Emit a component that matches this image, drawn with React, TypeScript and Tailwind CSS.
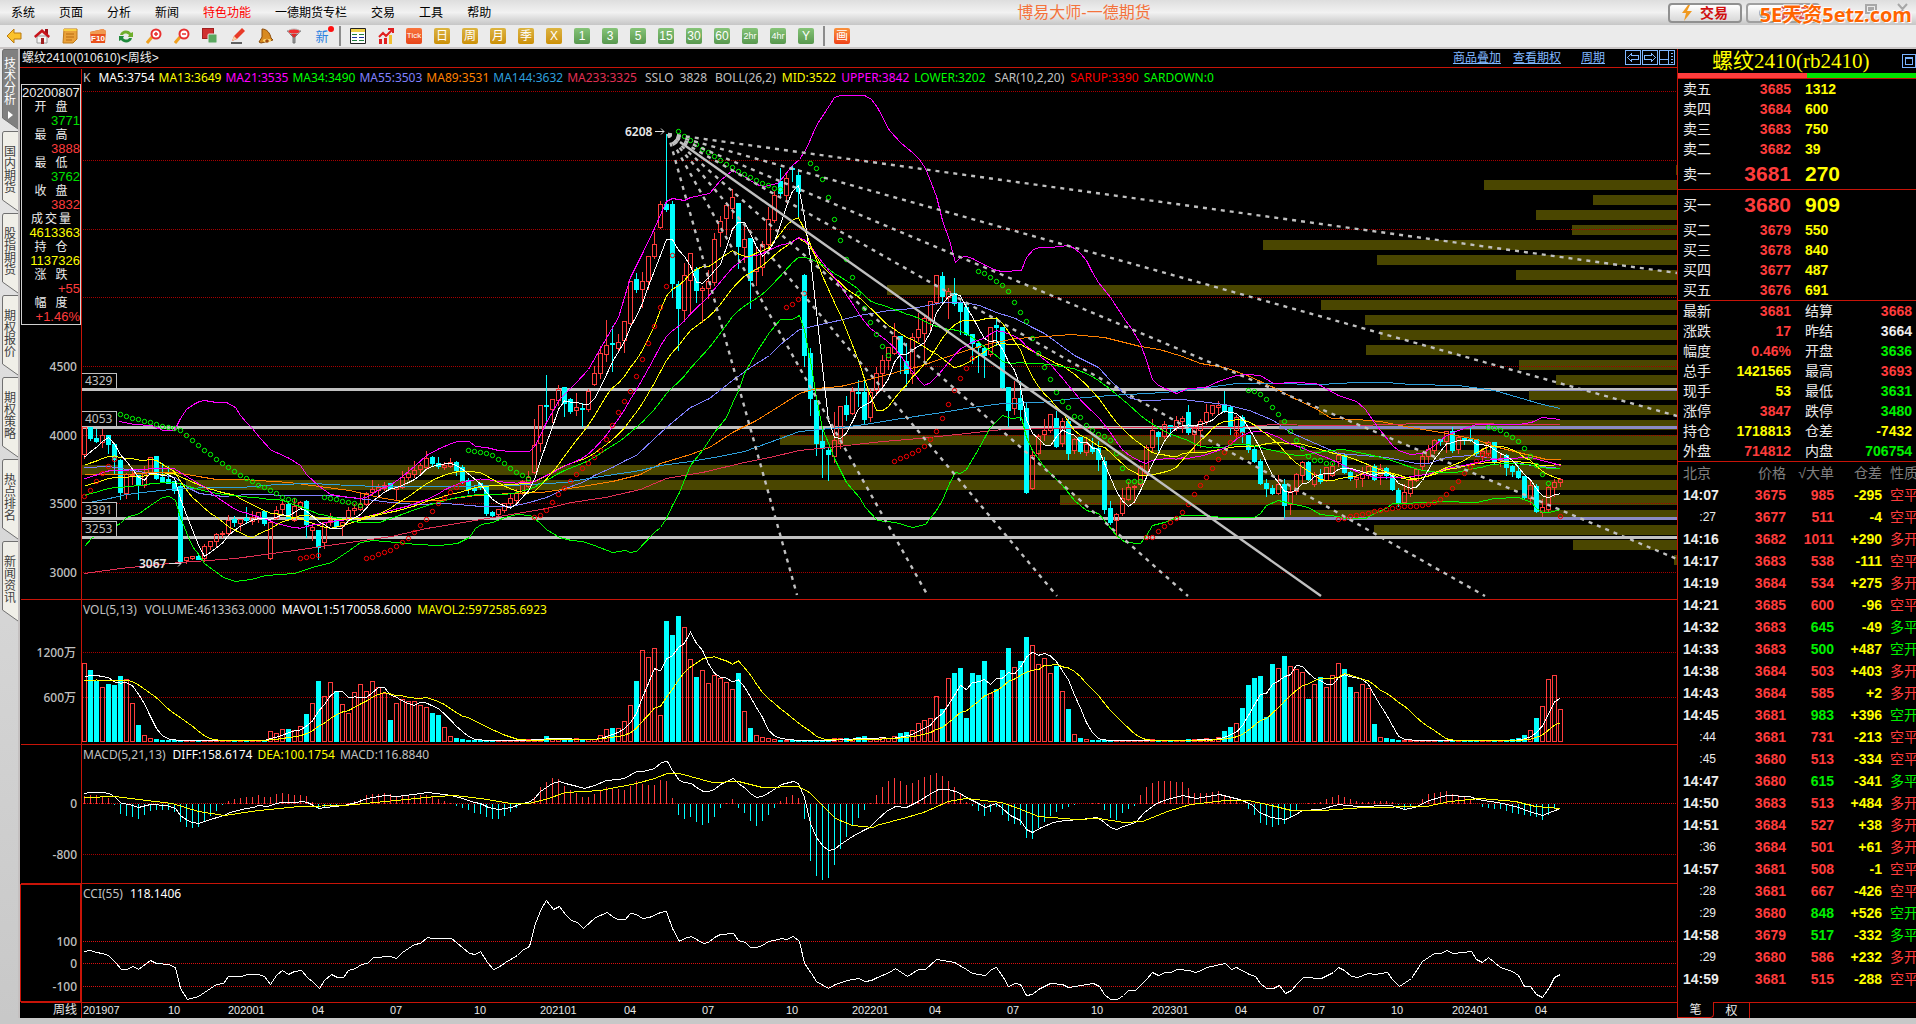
import React from 'react';

// Weekly bars: direction, body top, body bottom, high, low (chart units, one bar every 6 units)
const BARS = `
u 427 454 427 458|d 427 438 427 440|d 438 441 428 442|u 435 442 428 447|d 435 444 434 453|d 444 459 443 473|d 460 492 458 499|u 474 493 472 498|u 474 475 470 484|d 475 485 475 499
u 473 485 465 487|u 457 472 456 473|d 456 478 455 479|d 477 481 462 482|d 479 483 465 483|d 481 490 480 493|d 486 561 482 563|u 557 560 556 563|u 556 558 555 559|d 556 559 553 559
u 546 558 543 561|u 541 546 540 549|u 534 541 532 547|u 533 534 530 537|u 520 533 514 535|d 519 522 515 526|u 519 523 518 530|d 518 520 506 522|u 517 521 510 524|u 512 518 511 522
d 511 523 510 525|u 522 558 521 559|u 510 518 505 519|u 504 509 498 514|d 504 518 500 519|u 506 520 497 521|u 502 507 500 508|d 501 524 499 537|u 527 530 524 540|d 530 547 530 559
u 522 542 521 548|u 520 522 512 525|d 520 526 518 528|u 522 526 521 535|u 510 520 506 521|u 508 510 503 514|u 504 509 491 510|u 493 504 491 505|u 489 492 479 495|u 487 490 483 495
u 485 488 481 490|d 483 488 482 489|u 487 489 485 499|u 477 487 470 488|u 473 477 466 479|u 470 474 460 477|u 465 469 462 474|u 458 467 450 468|d 457 463 455 466|d 463 466 456 468
u 465 467 461 469|u 462 466 457 467|d 462 470 460 475|d 467 481 464 483|d 480 489 477 493|d 488 490 484 492|d 483 487 482 489|d 485 513 484 515|d 512 515 510 517|u 509 514 508 516
u 503 510 502 512|u 498 503 493 505|u 493 500 488 502|u 481 493 479 494|u 477 486 470 487|u 445 472 418 473|u 405 443 405 451|d 405 406 374 421|u 399 409 398 422|u 389 400 384 405
d 387 403 386 416|d 399 411 397 413|u 407 410 392 415|d 408 409 402 426|u 391 409 388 411|u 373 384 365 385|u 353 373 345 378|u 345 354 319 361|d 343 344 325 371|u 342 348 333 350
u 321 340 321 352|u 281 323 280 324|d 279 289 272 292|u 281 289 271 307|u 256 281 255 289|u 244 256 231 258|u 204 227 200 228|d 204 209 133 211|d 204 283 200 297|d 284 308 280 350
u 275 310 262 320|u 253 280 252 312|d 269 290 266 302|u 288 290 285 322|u 281 288 269 298|u 239 282 232 285|u 221 232 215 246|u 205 218 201 234|u 197 208 188 218|d 203 246 202 268
u 239 247 225 262|d 238 280 237 308|u 269 271 247 285|u 244 267 240 275|u 219 244 206 250|u 195 220 190 222|d 181 193 167 196|u 178 195 172 202|d 168 169 164 181|d 175 191 168 218
d 275 355 273 366|d 353 398 347 415|d 400 443 395 455|d 441 448 425 477|d 450 454 446 480|u 440 456 411 462|u 406 443 405 448|d 405 414 395 420|u 391 413 386 414|d 392 393 379 406
d 392 419 380 424|u 392 417 388 421|u 373 390 366 395|u 360 373 354 390|u 347 360 346 369|u 336 353 322 354|d 336 354 335 373|d 361 373 342 386|u 337 373 332 383|u 329 337 312 341
u 318 333 314 360|u 301 320 300 329|u 275 302 274 304|d 276 296 271 302|u 291 297 287 318|d 293 303 277 305|d 303 311 300 334|d 307 334 303 335|d 334 343 333 363|d 343 347 340 372
d 348 355 345 377|u 327 354 326 356|d 325 327 317 345|d 327 387 326 388|d 387 410 386 426|u 398 408 380 414|d 398 409 380 420|d 408 492 401 493|u 455 488 450 489|u 436 453 433 454
u 430 434 418 440|u 414 430 413 432|d 418 446 410 447|u 421 443 417 446|d 421 453 416 459|u 439 450 437 453|d 437 451 436 453|u 444 452 437 455|d 447 451 437 453|d 448 459 440 470
d 461 509 456 513|d 508 522 500 524|u 514 520 512 536|u 498 513 487 515|u 487 499 481 500|u 486 487 484 501|u 466 484 464 486|u 447 473 444 474|u 430 447 418 451|d 432 436 430 450
u 424 436 420 438|d 425 428 424 436|u 420 427 415 430|u 418 421 415 432|d 412 432 404 434|u 428 434 424 452|u 421 430 418 447|u 412 421 403 424|u 405 413 404 415|u 405 407 400 414
d 405 411 390 412|d 407 427 404 434|u 417 430 414 438|d 417 432 414 442|d 435 449 434 452|d 449 461 445 462|d 461 483 458 484|d 483 488 478 496|d 488 493 484 494|u 484 493 474 494
d 484 505 478 517|u 491 504 485 514|u 474 491 472 494|u 462 475 460 482|d 462 479 460 480|u 474 484 471 486|d 475 481 468 483|u 467 480 466 481|u 466 475 462 476|u 455 461 451 466
d 455 472 453 473|d 472 478 470 480|u 477 479 473 487|u 474 478 466 486|u 466 475 463 478|d 466 479 463 480|u 468 475 463 484|d 468 475 466 478|d 475 489 474 490|d 490 503 487 506
u 492 502 483 504|u 480 493 478 496|u 469 480 467 481|u 456 466 451 470|u 449 456 444 462|u 440 450 438 453|d 439 441 438 445|u 431 441 430 452|d 431 450 426 452|u 437 449 434 453
d 438 440 436 444|d 439 440 427 441|d 439 453 438 455|u 451 456 447 460|u 442 453 440 455|d 442 461 441 463|u 458 460 453 466|d 455 467 453 475|d 466 471 464 476|d 471 477 465 478
d 476 497 475 498|u 485 498 478 504|d 486 511 483 512|u 507 512 498 516|u 487 509 485 511|u 482 487 478 496|u 479 482 477 486`
  .trim()
  .split(/[|\n]/)
  .map((row) => {
    const [dir, ...n] = row.split(' ');
    const [top, bottom, high, low] = n.map(Number);
    return { up: dir === 'u', top, bottom, high, low, close: dir === 'u' ? top : bottom };
  });

const barX = (i: number) => 84 + i * 6;

// [first bar index, values...]
const VOLUME_RUNS: number[][] = [
  [0, 663, 670, 681, 687, 684, 685, 676, 679, 703, 725, 735, 738, 739],
  [31, 731, 733, 729, 729, 730, 726, 714, 703, 681, 696, 682, 691, 704, 713, 692, 684, 691, 681, 687, 693, 720, 703, 699, 701, 701, 705, 707, 713, 715, 727, 736, 738, 739],
  [73, 739, 739, 739, 739, 736, 739, 739, 739, 739, 738, 739, 739, 739, 735, 729, 728, 728, 721, 705, 681, 650, 657, 648, 715, 621, 635, 616, 627, 659, 677, 670, 683, 675, 678, 682, 689, 673, 711, 728, 735, 737, 738, 739],
  [125, 738, 738, 738, 739, 737, 736, 738, 738, 738, 738, 736, 733, 732, 730, 723, 720, 718, 696, 709, 678, 673, 668, 718, 673, 675, 661, 693, 689, 670, 648, 667, 661, 637, 645, 664, 658, 673, 666, 691, 709, 734, 738, 739],
  [178, 739],
  [184, 739, 739, 739, 738, 739, 737, 731, 727, 723, 708, 685, 678, 676, 717, 664, 668, 656, 666, 669, 672, 699, 684, 677, 687, 675, 663, 669, 687, 692, 684, 688, 724, 737, 738, 739],
  [238, 739, 738, 735, 730, 718, 706, 679, 675, 709],
];

const volumes = BARS.map(() => 740);
VOLUME_RUNS.forEach(([start, ...tops]) => tops.forEach((t, k) => (volumes[start + k] = t)));

const average = (values: number[], period: number, seed: number) =>
  values
    .map((_, i) => {
      let sum = 0;
      for (let k = 0; k < period; k++) sum += i - k >= 0 ? values[i - k] : seed;
      return `${barX(i)},${(sum / period).toFixed(1)}`;
    })
    .join(' ');

const closes = BARS.map((b) => b.close);

const LONG_LINES = [
  {
    color: '#8080ff',
    points:
      '84,467 109,466 126,469 150,473 163,475 175,477 187,487 199,493 223,496 246,494 300,495 331,495 349,497 366,499 391,502 415,504 445,503 481,506 511,506 529,502 546,497 565,488 582,482 594,475 612,467 625,460 636,455 654,438 666,427 690,407 709,398 732,380 750,367 769,355 780,344 799,329 816,325 834,321 859,315 889,310 912,308 942,302 964,302 979,305 996,312 1015,318 1032,327 1044,333 1074,355 1098,367 1110,380 1128,397 1140,400 1182,399 1224,404 1249,410 1273,420 1290,432 1315,443 1338,453 1386,457 1416,463 1428,463 1446,457 1470,455 1494,458 1531,465 1560,468',
  },
  {
    color: '#ff8000',
    points:
      '84,474 126,474 151,472 175,472 198,476 216,479 241,479 289,482 319,486 349,490 379,497 402,501 439,500 475,495 511,493 541,492 582,486 612,481 640,474 660,463 690,454 709,447 732,432 756,420 780,405 799,393 816,388 840,386 865,380 895,372 919,366 942,358 966,350 990,343 1015,338 1032,337 1071,334 1104,337 1140,346 1159,349 1182,356 1200,363 1224,367 1247,375 1273,387 1294,398 1315,408 1331,418 1357,419 1380,421 1410,427 1446,433 1476,439 1494,446 1518,452 1546,459 1560,459',
  },
  {
    color: '#2e9fdc',
    points:
      '84,503 109,498 126,494 151,491 180,488 216,487 241,487 276,484 312,483 349,485 379,486 439,486 511,485 565,482 594,477 640,470 660,465 690,461 714,457 744,451 769,442 799,431 840,427 865,424 901,418 942,412 972,407 1002,403 1039,402 1074,398 1110,395 1164,392 1200,388 1236,383 1273,383 1320,384 1356,382 1386,382 1410,384 1458,385 1494,390 1518,397 1542,404 1560,408',
  },
  {
    color: '#e03054',
    points:
      '84,573 120,568 180,562 235,558 294,550 342,543 391,536 426,528 463,522 505,515 546,508 571,502 605,497 640,489 654,483 666,478 702,472 744,462 769,457 799,450 829,447 882,441 919,438 966,433 1002,429 1060,428 1146,427 1236,427 1273,424 1320,425 1356,425 1422,423 1560,424',
  },
  {
    color: '#ff00ff',
    points:
      '119,421 134,424 151,425 163,430 174,430 180,418 186,409 193,404 199,401 204,400 216,402 226,402 235,407 240,415 246,422 252,428 259,437 271,450 276,452 289,458 300,465 306,474 319,486 330,494 342,496 360,498 366,497 379,489 391,484 402,476 415,465 426,455 439,448 451,443 457,441 469,441 475,446 486,447 498,450 511,451 529,451 535,445 546,422 559,399 571,387 576,382 588,369 600,348 618,317 630,277 642,253 654,228 666,201 672,198 684,200 690,197 709,193 720,180 732,170 744,176 756,184 764,186 777,183 780,180 792,165 799,159 806,148 816,125 829,105 834,97 840,95 864,95 871,99 877,107 889,130 901,143 912,152 919,159 925,168 931,183 936,196 942,220 949,240 955,262 960,257 966,256 972,258 985,265 996,270 1002,271 1021,270 1026,257 1033,249 1039,247 1050,247 1068,245 1074,248 1080,253 1086,260 1092,272 1098,282 1110,297 1125,320 1131,328 1140,343 1146,360 1152,379 1158,385 1176,393 1188,388 1205,387 1218,381 1236,375 1247,374 1260,375 1273,383 1294,382 1315,383 1320,385 1338,395 1356,401 1365,409 1374,422 1380,430 1392,445 1398,450 1410,454 1422,453 1434,445 1446,435 1458,430 1476,424 1518,424 1531,422 1542,417 1560,419',
  },
  {
    color: '#00ff00',
    points:
      '84,546 92,537 120,523 126,517 139,513 150,505 162,497 169,496 175,500 180,517 186,532 192,546 199,555 204,563 223,577 235,581 251,579 265,575 294,573 312,567 331,562 349,550 360,542 373,540 396,542 416,544 439,545 457,543 469,537 475,528 481,524 492,522 505,517 516,514 530,515 539,522 546,529 559,537 571,540 582,541 594,545 612,552 625,550 630,552 636,551 654,532 660,527 666,518 672,505 679,492 690,465 702,450 714,432 726,417 732,403 739,388 744,373 756,352 769,332 780,319 792,319 799,315 804,330 810,360 816,397 822,428 829,445 834,458 846,482 859,497 865,507 877,520 895,522 912,527 925,524 936,510 942,500 949,483 955,472 960,473 966,469 979,447 985,436 990,427 1002,415 1011,418 1021,417 1026,437 1032,450 1045,468 1062,485 1074,500 1086,510 1098,513 1104,520 1116,535 1125,542 1140,543 1146,535 1152,525 1164,522 1182,515 1205,515 1222,517 1254,517 1260,513 1266,505 1278,500 1290,503 1308,507 1320,514 1338,516 1344,518 1365,518 1374,513 1386,508 1392,503 1434,502 1440,501 1476,502 1494,498 1518,497 1531,502 1536,508 1542,512 1549,512 1560,509',
  },
];

const AVERAGES = [
  { color: '#ffff00', points: average(closes, 26, 488) },
  { color: '#00ff00', points: average(closes, 34, 497) },
  { color: '#ff00ff', points: average(closes, 21, 481) },
  { color: '#ffff00', points: average(closes, 13, 468) },
  { color: '#ffffff', points: average(closes, 5, 464) },
];

// Parabolic SAR runs: [first bar index, values...]
const SAR_DOWN = [
  [6, 414, 416, 418, 419, 421, 422, 424, 426, 427, 428, 430, 435, 440, 445, 450, 454, 459, 463, 467, 471, 475, 478, 481, 485, 487, 490, 493, 497, 499, 500],
  [40, 497, 498, 499, 501, 502, 503, 505],
  [64, 450, 451, 452, 453, 455, 459, 463, 468, 472, 475, 478],
  [99, 131, 136, 140, 144, 149, 152, 156, 160, 164, 167, 171, 174, 177, 180, 183, 185, 188, 189],
  [121, 163, 168, 179, 197, 219, 240, 259, 277, 293, 308, 322, 334, 346, 355],
  [149, 271, 273, 277, 281, 285, 291, 302, 312, 321, 338, 353, 367, 379, 392, 401, 407, 416, 417, 425, 430, 434, 436, 440, 453, 468, 481, 481, 481],
  [194, 390, 391, 394, 399, 407, 414, 421, 431, 440, 448, 456, 460, 460, 463, 463],
  [234, 427, 428, 430, 434, 437, 441, 448, 456, 465, 474, 483],
];
const SAR_UP = [
  [0, 496, 490, 481, 473, 466, 459],
  [36, 558, 557, 556, 555],
  [47, 558, 557, 554, 552, 550, 546, 542, 538, 532, 525, 519, 511, 503, 498, 492, 487, 483],
  [75, 517, 515, 510, 502, 494, 488, 481, 474, 468, 463, 457, 450, 439, 425, 412, 401, 391, 376, 359, 343, 326, 307, 286, 255],
  [117, 307, 304, 299, 293],
  [135, 461, 458, 456, 453, 450, 446, 439, 431, 418, 404, 390, 378, 368, 358],
  [177, 537, 537, 531, 526, 522, 518, 512, 504, 494, 485, 477, 468, 459, 452, 442, 434, 434],
  [209, 519, 518, 516, 515, 514, 513, 511, 510, 509, 508, 507, 506, 506, 506, 505, 504, 502, 499, 494, 488, 481, 473, 467, 461, 455, 455],
  [246, 516],
];

// Price distribution bands: [top, left]
const BANDS = [
  [165, 1676], [180, 1484], [195, 1593], [210, 1536], [225, 1572], [240, 1263], [255, 1377], [270, 1516], [285, 887],
  [300, 1321], [315, 1365], [330, 1380], [345, 1366], [360, 1519], [375, 1556], [390, 1529], [405, 1319], [420, 1279],
  [435, 780], [450, 1038], [465, 82], [480, 186], [495, 1060], [510, 1284], [525, 1374], [540, 1573], [555, 1674],
];

const FAN = [
  [797, 595], [928, 596], [1057, 596], [1188, 596], [1485, 596], [1677, 559], [1677, 416], [1677, 273],
];

const DIFF =
  '84,793 90,792 102,792 109,793 115,797 121,803 129,804 138,807 150,804 166,805 175,808 180,815 187,820 192,822 198,823 204,821 223,815 230,812 241,809 253,807 258,805 267,806 276,803 282,802 296,802 301,801 307,802 313,805 318,808 333,806 344,805 356,802 367,798 385,795 396,796 413,794 427,792 451,795 462,798 474,802 480,803 488,807 498,809 511,807 522,803 528,802 534,798 540,791 546,787 552,783 559,781 565,783 577,786 584,788 594,785 606,780 617,779 624,778 636,771 643,771 654,768 661,762 667,761 672,770 679,780 684,782 691,783 696,787 703,791 708,791 714,789 720,784 726,781 733,778 738,783 745,788 750,793 756,797 762,796 769,792 781,784 793,781 798,783 804,797 810,823 816,837 822,845 828,850 834,849 840,844 852,836 863,830 869,827 876,820 886,811 895,806 906,807 918,801 929,794 938,789 948,789 958,792 966,797 978,803 985,807 996,803 1002,808 1010,815 1020,820 1026,829 1032,832 1041,827 1053,822 1064,820 1081,819 1097,817 1104,822 1110,827 1116,829 1123,826 1135,822 1144,812 1156,803 1167,799 1182,795 1196,798 1219,794 1239,799 1251,804 1259,812 1271,817 1285,819 1294,815 1302,810 1320,809 1338,804 1357,806 1391,805 1404,809 1414,807 1429,800 1446,795 1469,796 1477,799 1503,803 1518,807 1529,811 1542,815 1552,811 1560,808';
const DEA =
  '84,797 115,796 138,799 172,803 198,811 224,815 258,810 299,806 344,805 385,801 436,796 454,795 480,798 511,803 528,803 545,799 565,792 600,790 636,783 654,778 667,773 679,773 712,782 738,781 762,787 798,786 809,792 827,810 835,818 852,825 873,827 876,825 906,817 923,812 948,801 966,798 1001,802 1018,808 1038,816 1076,819 1098,818 1124,822 1142,821 1167,811 1190,804 1225,800 1248,800 1271,805 1291,810 1322,810 1363,807 1426,806 1449,801 1480,798 1515,801 1535,806 1560,808';
const CCI =
  '84,951 90,950 96,952 102,953 108,955 115,962 121,969 126,969 133,966 138,969 150,960 156,963 168,964 175,967 180,988 187,999 198,996 210,988 216,984 223,983 228,976 241,976 247,974 258,974 264,976 270,984 276,975 282,970 288,974 294,971 301,970 307,977 313,982 319,988 324,980 331,974 337,977 343,977 348,970 355,968 361,964 367,963 373,957 390,956 396,958 402,952 414,944 420,943 427,937 432,938 451,938 456,942 469,953 475,954 480,951 487,962 493,969 498,967 505,962 517,955 522,950 529,946 535,923 541,908 546,900 553,909 559,906 565,914 571,920 577,922 583,928 595,917 607,912 613,917 618,919 625,919 630,913 636,914 642,918 649,917 660,912 666,911 672,928 679,941 684,938 691,936 703,943 708,942 714,937 720,934 733,933 738,940 745,942 750,947 756,947 762,945 768,941 774,940 781,938 786,939 793,936 799,941 804,963 811,973 816,981 828,988 835,984 847,980 858,978 865,981 871,980 877,977 889,972 895,968 907,976 918,969 925,969 936,959 954,962 966,969 972,973 985,975 991,969 996,967 1003,977 1008,986 1015,983 1020,984 1026,995 1032,994 1038,989 1050,983 1062,984 1068,987 1093,983 1099,986 1104,994 1110,999 1117,999 1123,995 1128,990 1135,990 1147,978 1152,972 1158,975 1165,972 1170,972 1177,969 1189,970 1195,972 1201,970 1206,967 1225,963 1231,969 1236,967 1249,974 1255,976 1260,983 1266,988 1273,988 1279,985 1285,993 1291,990 1297,983 1303,977 1321,978 1333,972 1338,967 1344,970 1351,976 1357,977 1368,973 1375,974 1387,972 1392,979 1399,986 1411,978 1422,961 1434,953 1441,953 1446,950 1453,953 1471,951 1476,959 1482,962 1488,957 1500,967 1512,971 1518,975 1524,986 1530,986 1536,994 1542,997 1549,987 1554,977 1560,974';

const sample = (line: string) => {
  const pts = line.split(' ').map((p) => p.split(',').map(Number));
  return (x: number) => {
    const k = Math.max(1, pts.findIndex((p) => p[0] >= x));
    const [x0, y0] = pts[k - 1];
    const [x1, y1] = pts[k];
    return y0 + ((y1 - y0) * (x - x0)) / (x1 - x0 || 1);
  };
};
const diffAt = sample(DIFF);
const deaAt = sample(DEA);

const TIME_AXIS: [number, string][] = [
  [83, '201907'], [168, '10'], [228, '202001'], [312, '04'], [390, '07'], [474, '10'], [540, '202101'], [624, '04'],
  [702, '07'], [786, '10'], [852, '202201'], [929, '04'], [1007, '07'], [1091, '10'], [1152, '202301'], [1235, '04'],
  [1313, '07'], [1391, '10'], [1452, '202401'], [1535, '04'],
];

const LEVELS: [number, string][] = [[389, '4329'], [427, '4053'], [518, '3391'], [537, '3253']];

type Part = [string, string, number?];

const Legend = ({ y, parts }: { y: number; parts: Part[] }) => (
  <text x="83" y={y}>
    {parts.map(([text, color, gap = 4], i) => (
      <tspan key={text} fill={color} dx={i ? gap : 0}>{text}</tspan>
    ))}
  </text>
);

const Dots = ({ runs, color }: { runs: number[][]; color: string }) => (
  <g fill="none" stroke={color}>
    {runs.map(([start, ...ys]) =>
      ys.map((y, k) => <circle key={`${start}-${k}`} cx={barX(start + k)} cy={y} r="2.2" />)
    )}
  </g>
);

const GREY = '#c0c0c0';

const Chart = () => (
  <svg viewBox="20 68 1657 950" className="block h-auto w-full font-['Noto_Sans','Noto_Sans_CJK_SC',sans-serif] text-[12px]" role="img" aria-label="螺纹2410 周线">
    {/* Price distribution */}
    <g fill="#4a4600">
      {BANDS.map(([y, x]) => <rect key={y} x={x} y={y} width={1677 - x} height="10" />)}
    </g>

    {/* Grid */}
    <g transform="translate(.5 .5)" stroke="#a80000" strokeDasharray="1 1" shapeRendering="crispEdges">
      {[91, 160, 229, 297, 366, 435, 503, 572, 652, 697, 854].map((y) => <path key={y} d={`M82 ${y}H1677`} />)}
      <g stroke="#d81010">
        {[803, 941, 963, 986].map((y) => <path key={y} d={`M82 ${y}H1677`} />)}
      </g>
    </g>

    {/* Support and resistance levels */}
    <g fill={GREY} shapeRendering="crispEdges">
      {LEVELS.map(([y]) => <rect key={y} x="81" y={y - 1} width="1596" height="3" />)}
      <rect x="1279" y="426" width="398" height="3" fill="#8a8ac4" />
      <rect x="1284" y="517" width="393" height="3" fill="#8a8ac4" />
      <rect x="1529" y="390" width="148" height="1" fill="#8a8ac4" />
    </g>

    {/* Candles */}
    <g transform="translate(.5 .5)" shapeRendering="crispEdges">
      {BARS.map((b, i) => {
        const x = barX(i);
        return b.up ? (
          <g key={i} stroke="#ff3c3c" fill="none">
            <path d={`M${x} ${b.high}V${b.top}M${x} ${b.bottom}V${b.low}`} />
            <rect x={x - 2} y={b.top} width="4" height={b.bottom - b.top} />
          </g>
        ) : (
          <g key={i} stroke="#00ffff" fill="#00ffff">
            <path d={`M${x} ${b.high}V${b.low}`} />
            <rect x={x - 2} y={b.top} width="4" height={b.bottom - b.top} />
          </g>
        );
      })}
    </g>

    {/* Moving averages and Bollinger bands */}
    <g transform="translate(.5 .5)" fill="none" shapeRendering="crispEdges">
      {[...LONG_LINES, ...AVERAGES].map((l, i) => <polyline key={i} points={l.points} stroke={l.color} />)}
    </g>

    <g transform="translate(.5 .5)">
      <Dots runs={SAR_DOWN} color="#00ff00" />
      <Dots runs={SAR_UP} color="#ff0000" />
    </g>

    {/* Gann fan */}
    <g stroke={GREY} strokeWidth="2.4">
      {FAN.map(([x, y]) => <path key={`${x}-${y}`} d={`M668 134L${x} ${y}`} strokeDasharray="4 5" />)}
      <path d="M680 142L1321 596" />
    </g>

    {/* Level labels */}
    {LEVELS.map(([y, label]) => (
      <g key={label}>
        <rect x="81.5" y={y - 15.5} width="35" height="15" fill="#000" stroke={GREY} />
        <text x="85" y={y - 4} fill={GREY}>{label}</text>
      </g>
    ))}
    <g fill="#e8e8e8" fontWeight="600">
      <text x="625" y="136">6208</text>
      <text x="139" y="568">3067</text>
    </g>
    <path d="M655 131.5h9m-3-3l3 3l-3 3M169 563.5h12m-3-3l3 3l-3 3" fill="none" stroke="#e0e0e0" />

    {/* Volume */}
    <g transform="translate(.5 .5)" shapeRendering="crispEdges">
      {BARS.map((b, i) => (
        <rect
          key={i}
          x={barX(i) - 2}
          y={volumes[i]}
          width="4"
          height={741 - volumes[i]}
          fill={b.up ? 'none' : '#00ffff'}
          stroke={b.up ? '#ff3c3c' : '#00ffff'}
        />
      ))}
      <polyline points={average(volumes, 5, 680)} fill="none" stroke="#fff" />
      <polyline points={average(volumes, 13, 682)} fill="none" stroke="#ffff00" />
    </g>

    {/* MACD and CCI */}
    <g transform="translate(.5 .5)" shapeRendering="crispEdges" fill="none">
      {BARS.map((_, i) => {
        const x = barX(i);
        const h = Math.round(1.9 * (diffAt(x) - deaAt(x)));
        return <path key={i} d={`M${x} 803v${h}`} stroke={h < 0 ? '#ff3c3c' : '#00ffff'} />;
      })}
      <polyline points={DIFF} stroke="#fff" />
      <polyline points={DEA} stroke="#ffff00" />
      <polyline points={CCI} stroke="#fff" />
    </g>

    {/* Frames */}
    <g transform="translate(.5 .5)" stroke="#c81408" fill="none" shapeRendering="crispEdges">
      <path d="M81 68V1018M20 599H1677M20 744H1677M20 883H1677M20 1002H1677" />
      <path d="M20 884H80V1001H20Z" />
    </g>

    {/* Value axes */}
    <g fill="#c0c0c0" textAnchor="end" fontWeight="500">
      <text x="77" y="371">4500</text>
      <text x="77" y="440">4000</text>
      <text x="77" y="508">3500</text>
      <text x="77" y="577">3000</text>
      <text x="76" y="657">1200万</text>
      <text x="76" y="702">600万</text>
      <text x="77" y="808">0</text>
      <text x="77" y="859">-800</text>
      <text x="77" y="946">100</text>
      <text x="77" y="968">0</text>
      <text x="77" y="991">-100</text>
    </g>
    <g fill="#e8e8e8" className="font-['Liberation_Sans','Noto_Sans_CJK_SC',sans-serif] text-[11px]">
      <text x="77" y="1014" textAnchor="end" fontSize="12">周线</text>
      {TIME_AXIS.map(([x, label]) => <text key={x} x={x} y="1014">{label}</text>)}
    </g>

    {/* Indicator values */}
    <Legend
      y={82}
      parts={[
        ['K', GREY], ['MA5:3754', '#fff', 8], ['MA13:3649', '#ffff00'], ['MA21:3535', '#ff00ff'], ['MA34:3490', '#00ff00'],
        ['MA55:3503', '#8080ff'], ['MA89:3531', '#ff8000'], ['MA144:3632', '#2e9fdc'], ['MA233:3325', '#e03054'],
        ['SSLO', GREY, 8], ['3828', GREY, 6], ['BOLL(26,2)', GREY, 8], ['MID:3522', '#ffff00', 6], ['UPPER:3842', '#ff00ff', 5],
        ['LOWER:3202', '#00ff00', 5], ['SAR(10,2,20)', GREY, 9], ['SARUP:3390', '#ff0000', 6], ['SARDOWN:0', '#00ff00', 5],
      ]}
    />
    <Legend y={614} parts={[['VOL(5,13)', GREY], ['VOLUME:4613363.0000', GREY, 8], ['MAVOL1:5170058.6000', '#fff', 6], ['MAVOL2:5972585.6923', '#ffff00', 6]]} />
    <Legend y={759} parts={[['MACD(5,21,13)', GREY], ['DIFF:158.6174', '#fff', 7], ['DEA:100.1754', '#ffff00', 5], ['MACD:116.8840', GREY, 5]]} />
    <Legend y={898} parts={[['CCI(55)', GREY], ['118.1406', '#fff', 7]]} />
  </svg>
);

const MENUS = ['系统', '页面', '分析', '新闻', '特色功能', '一德期货专栏', '交易', '工具', '帮助'];

const SIDE_TABS = ['技术分析', '国内期货', '股指期货', '期权报价', '期权策略', '热点排名', '新闻资讯'];

const GOLD = ['日', '周', '月', '季', 'X'];
const GREEN = ['1', '3', '5', '15', '30', '60', '2hr', '4hr', 'Y'];

const TOOL_ICONS: [string, React.ReactNode][] = [
  ['后退', <path key="a" d="M1 8l7-7v4h7v6H8v4z" fill="#fbc22c" stroke="#b97a10" />],
  ['首页', <g key="b"><path d="M3 8h10v7H3z" fill="#f4f4f4" stroke="#999" /><path d="M11 1h3v5h-3z" fill="#a01018" /><path d="M0 8l8-7 8 7-1.5 2L8 4.5 1.5 10z" fill="#c8141c" /><path d="M7 10h3v6H7z" fill="#a02020" /></g>],
  ['笔记', <g key="c"><path d="M2 1h13v10l-4 4H1z" fill="#e9a13a" stroke="#c07a18" /><path d="M1.5 2h13" stroke="#f8d040" strokeWidth="2" /><path d="M4 6h8M4 9h8M4 12h6" stroke="#b86a10" /></g>],
  ['F10', <g key="d"><path d="M0 4l13-3 3 2-1 12H1z" fill="#e8501c" /><path d="M0 4l13-3 3 2v3H0z" fill="#f09a50" /><text x="8" y="13" fontSize="8" fontWeight="700" textAnchor="middle" fill="#fff">F10</text></g>],
  ['刷新', <g key="e"><path d="M2 7c1-5 8-6 11-2l2-1v5h-5l1-2C9 5 6 5 5 7z" fill="#6fae2c" /><path d="M14 10c-1 5-8 6-11 2l-2 1V8h5l-1 2c2 2 5 2 6 0z" fill="#1f8a3c" /></g>],
  ['放大', <g key="f"><path d="M1 15l5-6" stroke="#f0a020" strokeWidth="3" /><circle cx="10" cy="6" r="4.5" fill="#fff" stroke="#e83030" strokeWidth="2" /><path d="M8 6h4M10 4v4" stroke="#e83030" strokeWidth="1.5" /></g>],
  ['缩小', <g key="g"><path d="M1 15l5-6" stroke="#f0a020" strokeWidth="3" /><circle cx="10" cy="6" r="4.5" fill="#fff" stroke="#e83030" strokeWidth="2" /><path d="M8 6h4" stroke="#e83030" strokeWidth="1.5" /></g>],
  ['叠加', <g key="h"><rect width="11" height="10" x="0.5" y="0.5" fill="#d03030" stroke="#a02020" /><rect x="6" y="6" width="9" height="9" rx="1" fill="#5aa860" stroke="#e8e8e8" /></g>],
  ['画线', <g key="i"><path d="M2 13l2-5 8-8 3 3-8 8z" fill="#e83a28" /><path d="M2 13l2-5 3 3z" fill="#f8d0a0" /><path d="M1 15h11" stroke="#333" strokeWidth="1.5" /></g>],
  ['预警', <g key="j"><path d="M4 1c5 0 8 4 9 9l2 2-12 3-2-1 3-5z" fill="#d88a20" stroke="#8a4a08" /><ellipse cx="9" cy="12.5" rx="4" ry="1.8" fill="#ffd870" /><circle cx="9" cy="13" r="1.8" fill="#a04a10" /></g>],
  ['筛选', <g key="k"><path d="M1 3h14l-6 6v6H7V9z" fill="#999" stroke="#777" /><ellipse cx="8" cy="3.5" rx="6" ry="2.5" fill="#f03030" stroke="#bbb" /><path d="M5 6h6l-3 4z" fill="#e02828" /></g>],
];

const ToolIcon = ({ name, children }: { name: string; children: React.ReactNode }) => (
  <button aria-label={name} className="h-4 w-4">
    <svg viewBox="0 0 16 16" className="h-4 w-4">{children}</svg>
  </button>
);

const DAY_STATS = [
  ['开盘', '3771', 'text-[#00e000]'],
  ['最高', '3888', 'text-[#ff3c3c]'],
  ['最低', '3762', 'text-[#00e000]'],
  ['收盘', '3832', 'text-[#ff3c3c]'],
  ['成交量', '4613363', 'text-[#ffff00]'],
  ['持仓', '1137326', 'text-[#ffff00]'],
  ['涨跌', '+55', 'text-[#ff3c3c]'],
  ['幅度', '+1.46%', 'text-[#ff3c3c]'],
];

const ASKS = [['卖五', 3685, 1312], ['卖四', 3684, 600], ['卖三', 3683, 750], ['卖二', 3682, 39], ['卖一', 3681, 270]];
const BIDS = [['买一', 3680, 909], ['买二', 3679, 550], ['买三', 3678, 840], ['买四', 3677, 487], ['买五', 3676, 691]];

const R = 'text-[#ff3c3c]';
const G = 'text-[#00f000]';
const Y = 'text-[#ffff00]';
const W = 'text-[#ececec]';

const QUOTE = [
  ['最新', '3681', R, '结算', '3668', R],
  ['涨跌', '17', R, '昨结', '3664', W],
  ['幅度', '0.46%', R, '开盘', '3636', G],
  ['总手', '1421565', Y, '最高', '3693', R],
  ['现手', '53', Y, '最低', '3631', G],
  ['涨停', '3847', R, '跌停', '3480', G],
  ['持仓', '1718813', Y, '仓差', '-7432', Y],
  ['外盘', '714812', R, '内盘', '706754', G],
];

const TICKS = [
  ['14:07', '3675', '985', '-295', '空平'], [':27', '3677', '511', '-4', '空平'], ['14:16', '3682', '1011', '+290', '多开'],
  ['14:17', '3683', '538', '-111', '空平'], ['14:19', '3684', '534', '+275', '多开'], ['14:21', '3685', '600', '-96', '空平'],
  ['14:32', '3683', '645', '-49', '多平'], ['14:33', '3683', '500', '+487', '空开'], ['14:38', '3684', '503', '+403', '多开'],
  ['14:43', '3684', '585', '+2', '多开'], ['14:45', '3681', '983', '+396', '空开'], [':44', '3681', '731', '-213', '空平'],
  [':45', '3680', '513', '-334', '空平'], ['14:47', '3680', '615', '-341', '多平'], ['14:50', '3683', '513', '+484', '多开'],
  ['14:51', '3684', '527', '+38', '多开'], [':36', '3684', '501', '+61', '多开'], ['14:57', '3681', '508', '-1', '空平'],
  [':28', '3681', '667', '-426', '空平'], [':29', '3680', '848', '+526', '空开'], ['14:58', '3679', '517', '-332', '多平'],
  [':29', '3680', '586', '+232', '多开'], ['14:59', '3681', '515', '-288', '空平'],
];

const Ladder = ({ rows }: { rows: (string | number)[][] }) => (
  <table className="w-full table-fixed border-b border-[#c81408]">
    <tbody>
      {rows.map(([label, price, size]) => {
        const best = label === '卖一' || label === '买一';
        return (
          <tr key={label} className={best ? 'h-[30px] text-[21px]' : 'h-5 text-sm'}>
            <th className="w-10 p-0 pl-[5px] text-left text-sm font-normal text-[#ececec]">{label}</th>
            <td className="w-[73px] p-0 text-right font-bold text-[#ff3c3c]">{price}</td>
            <td className="p-0 pl-[14px] font-bold text-[#ffff00]">{size}</td>
          </tr>
        );
      })}
    </tbody>
  </table>
);

const QuotePanel = () => (
  <aside className="flex w-[239px] shrink-0 flex-col overflow-hidden border-l border-[#c81408] font-['Liberation_Sans','Noto_Sans_CJK_SC',sans-serif] leading-none">
    <div className="flex h-6 items-center justify-end">
      <h2 className="flex-1 pl-[34px] font-['Liberation_Serif','Noto_Sans_CJK_SC',serif] text-[21px] leading-6 text-[#ffff00]">螺纹2410(rb2410)</h2>
      <button aria-label="窗口" className="h-[14px] w-[14px] border border-[#7ab4ff] p-[2px]">
        <span className="block h-full w-full border border-t-2 border-[#7ab4ff]" />
      </button>
    </div>
    <div className="flex h-[6px] border-b border-[#c81408]">
      <div className="w-[54%] bg-[#ff3c3c]" />
      <div className="flex-1 bg-[#00e400]" />
    </div>
    <Ladder rows={ASKS} />
    <Ladder rows={BIDS} />
    <table className="w-full table-fixed border-b border-[#c81408] text-sm">
      <tbody>
        {QUOTE.map(([a, av, ac, b, bv, bc]) => (
          <tr key={a} className="h-5">
            <th className="w-10 p-0 pl-[5px] text-left font-normal text-[#ececec]">{a}</th>
            <td className={`w-[73px] p-0 text-right font-bold ${ac}`}>{av}</td>
            <th className="p-0 pl-[14px] text-left font-normal text-[#ececec]">{b}</th>
            <td className={`w-16 p-0 pr-1 text-right font-bold ${bc}`}>{bv}</td>
          </tr>
        ))}
      </tbody>
    </table>
    <table className="w-[250px] table-fixed text-sm whitespace-nowrap">
      <thead>
        <tr className="h-[22px] text-[#808080]">
          <th className="w-10 p-0 pl-[5px] text-left font-normal">北京</th>
          <th className="w-[68px] p-0 text-right font-normal">价格</th>
          <th className="w-12 p-0 text-right font-normal">√大单</th>
          <th className="w-12 p-0 text-right font-normal">仓差</th>
          <th className="w-[46px] p-0 pl-2 text-left font-normal">性质</th>
        </tr>
      </thead>
      <tbody>
        {TICKS.map(([time, price, size, change, kind], i) => {
          const color = kind === '多平' || kind === '空开' ? G : R;
          return (
            <tr key={i} className="h-[22px] font-bold">
              {time.startsWith(':') ? (
                <td className="p-0 pr-[2px] text-right text-xs font-normal text-[#ececec]">{time}</td>
              ) : (
                <td className="p-0 pl-[5px] text-[#ececec]">{time}</td>
              )}
              <td className="p-0 text-right text-[#ff3c3c]">{price}</td>
              <td className={`p-0 text-right ${color}`}>{size}</td>
              <td className="p-0 text-right text-[#ffff00]">{change}</td>
              <td className={`p-0 pl-2 font-normal ${color}`}>{kind}</td>
            </tr>
          );
        })}
      </tbody>
    </table>
    <div className="mt-auto flex h-4 text-xs text-[#ececec]">
      <button className="w-9 rounded-br border-r border-b border-[#c81408]">笔</button>
      <button className="w-9 border-t border-r border-[#c81408]">权</button>
      <div className="flex-1 border-t border-[#c81408]" />
    </div>
  </aside>
);

const App: React.FC = () => {
  return (
    <div className="flex min-h-screen flex-col overflow-hidden bg-[#c8c8c8] font-['Liberation_Sans','Noto_Sans_CJK_SC',sans-serif]">
      {/* Menu bar */}
      <header className="relative flex h-[25px] items-center bg-linear-to-b from-[#dedede] via-[#f2f2f2] to-[#c6c6c6] text-xs text-black">
        <nav className="flex gap-6 pl-[11px]">
          {MENUS.map((m) => (
            <button key={m} className={m === '特色功能' ? 'text-[#ff0000]' : ''}>{m}</button>
          ))}
        </nav>
        <h1 className="absolute inset-x-0 text-center text-base leading-none text-[#f4733c]">
          <span className="ml-[252px]">博易大师-一德期货</span>
        </h1>
        <div className="relative ml-auto flex items-center gap-1 pr-1">
          <button className="flex h-5 w-[74px] items-center justify-center gap-2 rounded border-2 border-[#909090] bg-linear-to-b from-white to-[#d8d8d8] text-sm font-bold text-[#d01010]">
            <svg viewBox="0 0 10 16" className="h-4 w-[10px]"><path d="M6 0L0 8h4l-2 8 8-10H5l3-6z" fill="#f09a20" /></svg>
            交易
          </button>
          <button className="flex h-5 w-[74px] items-center justify-center gap-2 rounded border-2 border-[#a0a0a0] bg-linear-to-b from-white to-[#d8d8d8] text-sm font-bold text-[#e05050]">
            <svg viewBox="0 0 14 14" className="h-[14px] w-[14px]"><circle cx="7" cy="7" r="6" fill="#a0a4a8" /></svg>
            论坛
          </button>
          <svg viewBox="0 0 80 20" className="ml-2 h-5 w-20" fill="none" stroke="#a8a8a8" strokeWidth="2">
            <path d="M7 9h10M34 2h10v8H34zM37 5h4v2h-4zM66 1l9 10M75 1l-9 10" />
          </svg>
          <span className="absolute right-1 -bottom-1 font-['Open_Sans','Noto_Sans_CJK_SC',sans-serif] text-xl leading-6 font-bold whitespace-nowrap text-[#ff6400] [text-shadow:1px_1px_0_#fff,-1px_-1px_0_#fff]">5E天资5etz.com</span>
        </div>
      </header>

      {/* Toolbar */}
      <div className="flex h-[24px] items-center gap-3 border-b-2 border-[#cac6c6] bg-[#ebebeb] pl-[6px]">
        {TOOL_ICONS.map(([name, icon]) => <ToolIcon key={name} name={name}>{icon}</ToolIcon>)}
        <button className="relative w-4 text-[13px] leading-none text-[#2a80e0]">
          新<span className="absolute -top-1 -right-1 h-[6px] w-[6px] rounded-full bg-[#ff1010]" />
        </button>
        <span className="-mx-[3px] h-5 w-[2px] bg-[#8c8c8c]" />
        <ToolIcon name="报价">
          <path d="M.5 .5h15v15H.5z" fill="#fff" stroke="#222" />
          <path d="M1 1h14v3H1z" fill="#f0d048" />
          <path d="M2 6.5h5M9 6.5h5M2 12.5h5M9 12.5h5" stroke="#208040" />
          <path d="M2 9.5h5M9 9.5h5" stroke="#2030a0" />
        </ToolIcon>
        <ToolIcon name="走势">
          <path d="M1 11h3v5H1zM6 10h3v6H6z" fill="#e02020" />
          <path d="M11 7h3v9h-3z" fill="#f0c030" />
          <path d="M1 9l4-4 3 3 6-6M10 1h5v4" fill="none" stroke="#e02020" strokeWidth="2" />
        </ToolIcon>
        <button className="h-4 w-4 rounded-[2px] bg-linear-to-b from-[#f8743c] to-[#e84418] text-[8px] leading-4 text-white">Tick</button>
        {GOLD.map((p) => (
          <button key={p} className="h-4 w-4 rounded-[2px] bg-linear-to-b from-[#dcb440] to-[#cc9000] text-center text-xs leading-4 text-white">{p}</button>
        ))}
        {GREEN.map((p) => (
          <button key={p} className={`h-4 w-4 rounded-[2px] bg-linear-to-b from-[#86c478] to-[#58984e] text-center leading-4 text-white ${p.length > 2 ? 'text-[9px]' : 'text-xs'}`}>{p}</button>
        ))}
        <span className="-mx-[3px] h-5 w-[2px] bg-[#8c8c8c]" />
        <button className="h-4 w-4 rounded-[2px] bg-linear-to-b from-[#f8903c] to-[#f04018] text-center text-xs leading-4 text-white">画</button>
      </div>

      <div className="flex">
        {/* Side tabs */}
        <nav className="w-5 shrink-0 border-r-2 border-[#c4c0c0] bg-linear-to-b from-[#e8e8e8] to-[#c8c8c8]">
          {SIDE_TABS.map((tab, i) => (
            <button key={tab} className="relative block h-[82px] w-[18px]">
              <svg viewBox="0 0 18 82" className="absolute inset-0 h-full w-full">
                <path d="M18 .5H4Q2.5 .5 2.5 3V69L18 80" fill={i ? '#f0efe8' : '#808080'} stroke="#707070" />
              </svg>
              <span className={`relative ml-1 block w-3 pb-1 text-xs leading-3 break-all ${i ? 'text-[#404040]' : '-mt-3 text-white'}`}>{tab}</span>
              {i === 0 && (
                <svg viewBox="0 0 5 8" className="absolute bottom-3 left-2 h-2 w-[5px]"><path d="M0 0l5 4-5 4z" fill="#fff" /></svg>
              )}
            </button>
          ))}
        </nav>

        {/* Chart area */}
        <main className="relative min-w-0 flex-1 bg-black">
          <div className="flex h-[19px] items-center border-b border-[#c81408] pr-[2px] text-xs text-[#ececec]">
            <h2 className="pl-[2px]">螺纹2410(010610)&lt;周线&gt;</h2>
            <div className="ml-auto flex items-center text-[#80b8ff]">
              <a href="#overlay" className="mr-3 underline">商品叠加</a>
              <a href="#options" className="mr-5 underline">查看期权</a>
              <a href="#period" className="mr-5 underline">周期</a>
              <svg viewBox="0 0 50 16" className="h-4 w-[50px]" fill="none" stroke="#80b8ff" shapeRendering="crispEdges">
                <path d="M.5 .5h15v14H.5zM17.5 .5h15v14h-15zM34.5 .5h15v14h-15z" />
                <path d="M2.5 7.5l4-4v2h7v4h-7v2zM30.5 7.5l-4-4v2h-7v4h7v2zM34.5 9.5h8M43.5 .5v14M46 3.5h2M46 6.5h2M46 9.5h2M46 12.5h2" />
              </svg>
            </div>
          </div>
          <Chart />
          {/* Cursor data window */}
          <dl className="absolute top-[35px] left-[1px] w-[60px] border border-[#d0d0d0] bg-black pt-px text-[13px] leading-[14px]">
            <dt className="pr-px text-right text-[#ececec]">20200807</dt>
            {DAY_STATS.map(([label, value, color]) => (
              <React.Fragment key={label}>
                <dt className="flex justify-around px-2 text-xs leading-[14px] text-[#ececec]">
                  {label.split('').map((c) => <span key={c}>{c}</span>)}
                </dt>
                <dd className={`text-right ${color}`}>{value}</dd>
              </React.Fragment>
            ))}
          </dl>
        </main>

        <div className="flex bg-black">
          <QuotePanel />
        </div>
      </div>
    </div>
  );
};

export default App;
